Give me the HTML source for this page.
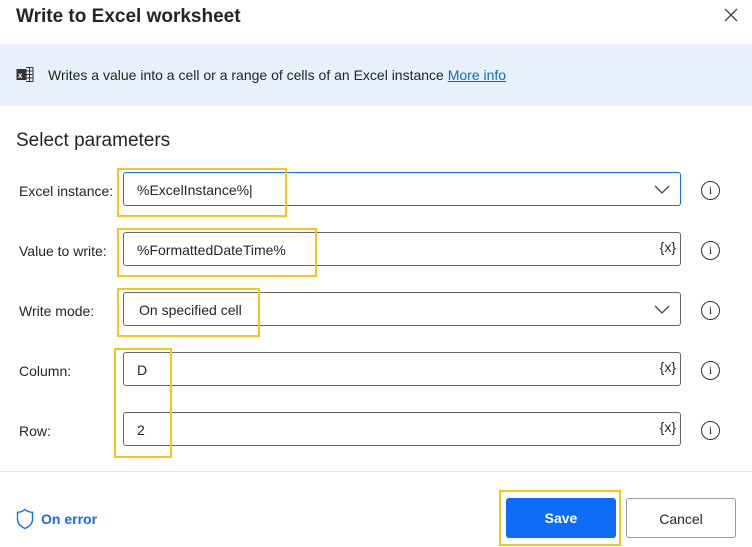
<!DOCTYPE html>
<html><head><style>
body{margin:0;width:752px;height:547px;background:#fff;font-family:"Liberation Sans",sans-serif;color:#242424;position:relative;overflow:hidden}
.a{position:absolute}
.lbl{position:absolute;left:19px;font-size:14px}
.inp{position:absolute;left:123px;width:556px;height:32px;border:1px solid #666;border-radius:3px;background:#fff}
.inp span{position:absolute;left:13px;top:9px;font-size:14px}
.vx{position:absolute;right:4px;top:6px;font-size:14px}
.chev{position:absolute;right:10px;top:10px}
.info{position:absolute;left:701px;width:17px;height:17px;border:1.3px solid #333;border-radius:50%;font-size:12px;text-align:center;line-height:17px;font-family:"Liberation Serif",serif}
.y{position:absolute;border:2.5px solid #f5c518}
</style></head><body>
<div class="a" style="left:16px;top:6px;font-size:19px;font-weight:bold;color:#242424">Write to Excel worksheet</div>
<svg class="a" style="left:723px;top:7px" width="16" height="16"><path d="M2 2L14 14M14 2L2 14" stroke="#444" stroke-width="1.3"/></svg>
<div class="a" style="left:0;top:44px;width:752px;height:61px;background:#e8f0fc"></div>
<svg class="a" style="left:16px;top:66px" width="18" height="17"><rect x="0.5" y="3" width="10" height="11" fill="#333"/><text x="2" y="12" font-size="8" fill="#fff" font-family="Liberation Sans" font-weight="bold">x</text><path d="M10 1.5H17V15.5H10M10 5H17M10 8.5H17M10 12H17M13.5 1.5V15.5" stroke="#333" fill="none" stroke-width="1"/></svg>
<div class="a" style="left:48px;top:67px;font-size:14px">Writes a value into a cell or a range of cells of an Excel instance <span style="color:#0f6cbd;text-decoration:underline">More info</span></div>
<div class="a" style="left:0;top:105px;width:752px;height:1px;background:#eee"></div>
<div class="a" style="left:16px;top:130px;font-size:19px">Select parameters</div>

<div class="lbl" style="top:183px">Excel instance:</div>
<div class="inp" style="top:172px;border-color:#0f6cf9"><span>%ExcelInstance%|</span><svg class="chev" width="16" height="12"><path d="M1 3L8 10L15 3" stroke="#444" fill="none" stroke-width="1.3"/></svg></div>
<div class="info" style="top:181px">i</div>

<div class="lbl" style="top:243px">Value to write:</div>
<div class="inp" style="top:232px"><span>%FormattedDateTime%</span><div class="vx">{x}</div></div>
<div class="info" style="top:241px">i</div>

<div class="lbl" style="top:303px">Write mode:</div>
<div class="inp" style="top:292px"><span style="left:15px">On specified cell</span><svg class="chev" width="16" height="12"><path d="M1 3L8 10L15 3" stroke="#444" fill="none" stroke-width="1.3"/></svg></div>
<div class="info" style="top:301px">i</div>

<div class="lbl" style="top:363px">Column:</div>
<div class="inp" style="top:352px"><span>D</span><div class="vx">{x}</div></div>
<div class="info" style="top:361px">i</div>

<div class="lbl" style="top:423px">Row:</div>
<div class="inp" style="top:412px"><span>2</span><div class="vx">{x}</div></div>
<div class="info" style="top:421px">i</div>

<div class="y" style="left:117px;top:168px;width:166px;height:45px"></div>
<div class="y" style="left:117px;top:228px;width:196px;height:45px"></div>
<div class="y" style="left:117px;top:288px;width:139px;height:45px"></div>
<div class="y" style="left:114px;top:348px;width:54px;height:106px"></div>

<div class="a" style="left:0;top:471px;width:752px;height:1px;background:#e6e6e6"></div>
<svg class="a" style="left:16px;top:508px" width="18" height="22"><path d="M9 1.5C6.5 3.5 4 4.3 1.5 4.3V11C1.5 15.5 4.5 18.5 9 20.5C13.5 18.5 16.5 15.5 16.5 11V4.3C14 4.3 11.5 3.5 9 1.5Z" stroke="#0f6cf9" fill="none" stroke-width="1.4"/></svg>
<div class="a" style="left:41px;top:511px;font-size:14px;color:#0f6cf9;font-weight:bold">On error</div>
<div class="y" style="left:499px;top:490px;width:118px;height:52px"></div>
<div class="a" style="left:506px;top:498px;width:110px;height:40px;background:#0f6cf9;border-radius:3px;color:#fff;font-size:14px;font-weight:bold;text-align:center;line-height:41px">Save</div>
<div class="a" style="left:626px;top:498px;width:108px;height:38px;border:1px solid #999;border-radius:3px;font-size:14px;text-align:center;line-height:40px">Cancel</div>
</body></html>
